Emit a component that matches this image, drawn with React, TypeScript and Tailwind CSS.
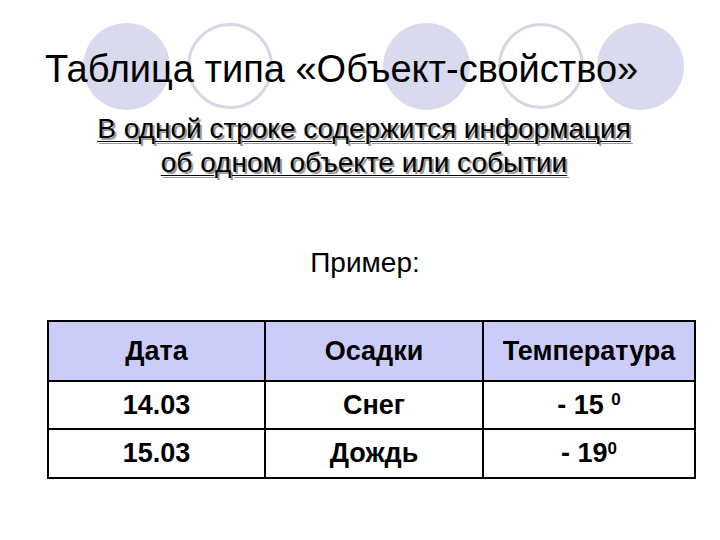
const rows = [
  { date: '14.03', rain: 'Снег', temp: '- 15 ', deg: '0' },
  { date: '15.03', rain: 'Дождь', temp: '- 19', deg: '0' },
]

function Circles() {
  // decorative template bubbles behind the title
  return (
    <div className="absolute inset-0 pointer-events-none">
      <div className="absolute left-[83px] top-[23px] h-[87px] w-[87px] rounded-full bg-[#dadaee]" />
      <div className="absolute left-[187px] top-[23px] h-[86px] w-[86px] rounded-full border-[3px] border-[#d6d6e6]" />
      <div className="absolute left-[383px] top-[23px] h-[87px] w-[87px] rounded-full bg-[#dadaee]" />
      <div className="absolute left-[498px] top-[23px] h-[86px] w-[86px] rounded-full border-[3px] border-[#d6d6e6]" />
      <div className="absolute left-[597px] top-[23px] h-[87px] w-[87px] rounded-full bg-[#dadaee]" />
    </div>
  )
}

export default function App() {
  return (
    <div className="relative h-[540px] w-[720px] overflow-hidden bg-white font-['Liberation_Sans',Arial,sans-serif] text-black">
      <Circles />
      <div className="relative flex flex-col">
        {/* Title */}
        <h1 className="pl-[45px] pt-[50px] text-[38px] leading-none">
          Таблица типа «Объект-свойство»
        </h1>

        {/* Subtitle */}
        <p className="ml-[8px] mt-[24px] text-center text-[28px] leading-[34px] underline decoration-1 underline-offset-[3px] [text-shadow:2px_2px_0_#9a9a9a]">
          В одной строке содержится информация
          <br />
          об одном объекте или событии
        </p>

        <p className="ml-[10px] mt-[66px] text-center text-[28px] leading-[34px]">Пример:</p>

        {/* Table */}
        <table className="ml-[47px] mt-[40px] w-[647px] table-fixed border-collapse border-2 border-black text-[27px] font-bold">
          <colgroup>
            <col className="w-[217px]" />
            <col className="w-[218px]" />
            <col className="w-[212px]" />
          </colgroup>
          <thead>
            <tr className="h-[60px] bg-[#ccccf8]">
              <th className="border-2 border-black text-center font-bold">Дата</th>
              <th className="border-2 border-black text-center font-bold">Осадки</th>
              <th className="border-2 border-black text-center font-bold">Температура</th>
            </tr>
          </thead>
          <tbody>
            {rows.map((r, i) => (
              <tr key={r.date} className={i === 0 ? 'h-[48px]' : 'h-[49px]'}>
                <td className="border-2 border-black text-center">{r.date}</td>
                <td className="border-2 border-black text-center">{r.rain}</td>
                <td className="border-2 border-black text-center whitespace-pre">
                  {r.temp}
                  <sup className="text-[17px]">{r.deg}</sup>
                </td>
              </tr>
            ))}
          </tbody>
        </table>
      </div>
    </div>
  )
}
